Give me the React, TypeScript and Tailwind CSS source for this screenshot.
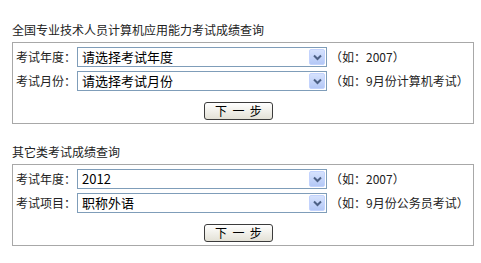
const font = { fontFamily: '"Noto Sans CJK SC", "Liberation Sans", sans-serif' };

interface Row {
  label: string;
  value: string;
  hint: string;
}

const sections: { title: string; rows: Row[] }[] = [
  {
    title: "全国专业技术人员计算机应用能力考试成绩查询",
    rows: [
      { label: "考试年度：", value: "请选择考试年度", hint: "（如：2007）" },
      { label: "考试月份：", value: "请选择考试月份", hint: "（如：9月份计算机考试）" },
    ],
  },
  {
    title: "其它类考试成绩查询",
    rows: [
      { label: "考试年度：", value: "2012", hint: "（如：2007）" },
      { label: "考试项目：", value: "职称外语", hint: "（如：9月份公务员考试）" },
    ],
  },
];

function FakeSelect({ value }: { value: string }) {
  return (
    <div className="flex h-[20px] w-[250px] items-center border border-[#7f9db9] bg-white p-[1px]">
      <span className="flex-1 pl-[3px] text-[13px] leading-[16px] text-black">{value}</span>
      {/* dropdown arrow */}
      <div className="flex h-full w-[16px] items-center justify-center rounded-[2px] border border-[#c3d3fd] bg-gradient-to-b from-[#d6e2fd] to-[#b4c8f6]">
        <svg width="9" height="7" viewBox="0 0 9 7">
          <path d="M1 1.5 L4.5 5 L8 1.5" fill="none" stroke="#4d6185" strokeWidth="2" />
        </svg>
      </div>
    </div>
  );
}

export default function App() {
  return (
    <div className="h-[263px] w-[481px] bg-white px-[12px] pt-[22px] text-[#222]" style={font}>
      {sections.map((s, i) => (
        <div key={s.title} className={i > 0 ? "mt-[20px]" : ""}>
          <div className="mb-[4px] text-[12px] leading-[16px]">{s.title}</div>
          <div className="flex w-[462px] flex-col gap-[4px] border border-[#a8a8a8] px-[3px] pb-[3px] pt-[4px]">
            {s.rows.map((r) => (
              <div key={r.label} className="flex items-center">
                <span className="w-[61px] text-[12px] leading-[16px]">{r.label}</span>
                <FakeSelect value={r.value} />
                <span className="ml-[3px] text-[12px] leading-[16px]">{r.hint}</span>
              </div>
            ))}
            <div className="mt-[7px] flex pl-[188px]">
              <button className="flex h-[18px] w-[69px] items-center justify-center rounded-[3px] border border-[#3c3c3c] bg-gradient-to-b from-white to-[#e3e1d6] text-[12px] leading-[14px] text-black">
                下&nbsp;&nbsp;一&nbsp;&nbsp;步
              </button>
            </div>
          </div>
        </div>
      ))}
    </div>
  );
}
